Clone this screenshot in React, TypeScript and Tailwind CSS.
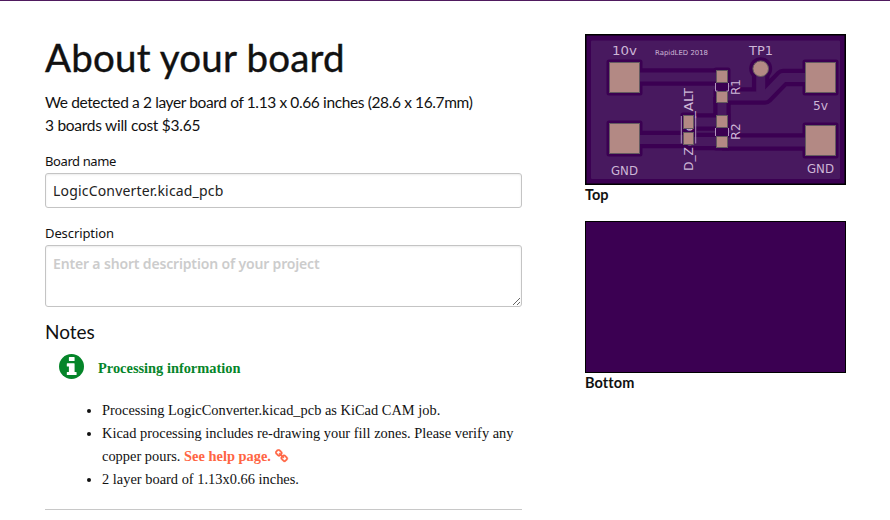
import type { ReactNode } from "react";

const PADS = [
  { x: 609, y: 62, w: 31, h: 31 },
  { x: 805, y: 62, w: 31, h: 31 },
  { x: 609, y: 123, w: 31, h: 31 },
  { x: 805, y: 125, w: 31, h: 31 },
  { x: 716, y: 70, w: 12, h: 13 },
  { x: 716, y: 91, w: 12, h: 12 },
  { x: 716, y: 115, w: 12, h: 13 },
  { x: 716, y: 136, w: 12, h: 12 },
  { x: 683, y: 115, w: 11, h: 14 },
  { x: 683, y: 132, w: 11, h: 13 },
];

const TRACES = [
  "M625 77H722",
  "M820 77.5H783L765 96H722",
  "M760.7 69V94",
  "M722 97V122H688",
  "M625 139.500H688L691 141.500H722",
  "M722 142H820",
];

const LABELS = [
  { t: "10v", x: 612, y: 55, w: 25, s: 12.5 },
  { t: "RapidLED 2018", x: 655, y: 54.5, w: 53, s: 6.8 },
  { t: "TP1", x: 749, y: 55, w: 24, s: 12.5 },
  { t: "5v", x: 813, y: 109.5, w: 15, s: 12.5 },
  { t: "GND", x: 611, y: 175, w: 27, s: 12.5 },
  { t: "GND", x: 807, y: 173, w: 27, s: 12.5 },
];

const VERTICAL_LABELS = [
  { t: "R1", x: 740, y: 95, w: 16 },
  { t: "R2", x: 740, y: 140, w: 17 },
  { t: "D_Z", x: 693, y: 171, w: 24 },
  { t: "ener", x: 693, y: 146, w: 27 },
  { t: "_ALT", x: 693, y: 118, w: 30 },
];

function TopBoard() {
  return (
    <svg className="block h-[151px] w-[261px]" viewBox="585 34 261 151">
      <rect x="585" y="34" width="261" height="151" fill="#000" />
      <rect x="586.5" y="35.5" width="258" height="148" fill="#3b0052" />
      <rect x="591" y="40.5" width="249" height="138.5" rx="1" fill="#48195f" />
      <g fill="none" stroke="#3b0052" strokeWidth="17.5" strokeLinejoin="round">
        {TRACES.map((d) => <path key={d} d={d} />)}
      </g>
      {PADS.map((p) => (
        <rect key={`${p.x}-${p.y}`} x={p.x - 2.5} y={p.y - 2.5} width={p.w + 5} height={p.h + 5} rx="2.5" fill="#3b0052" />
      ))}
      <circle cx="760.7" cy="68.7" r="11.5" fill="#3b0052" />
      <g fill="none" stroke="#48195f" strokeWidth="9" strokeLinejoin="round">
        {TRACES.map((d) => <path key={d} d={d} />)}
      </g>
      <rect x="716" y="83" width="12" height="8" fill="#3b0052" />
      <rect x="716" y="128" width="12" height="8" fill="#3b0052" />
      <g fill="#cdb6d6" fontFamily="'DejaVu Sans', sans-serif" fontWeight="400">
        {LABELS.map((l) => (
          <text key={`${l.t}${l.x}`} x={l.x} y={l.y} fontSize={l.s} textLength={l.w} lengthAdjust="spacingAndGlyphs">{l.t}</text>
        ))}
        {VERTICAL_LABELS.map((l) => (
          <text key={l.t} transform={`translate(${l.x} ${l.y}) rotate(-90)`} fontSize="12.5" textLength={l.w} lengthAdjust="spacingAndGlyphs">{l.t}</text>
        ))}
      </g>
      {PADS.map((p) => (
        <rect key={`${p.x}-${p.y}`} x={p.x + 0.5} y={p.y + 0.5} width={p.w - 1} height={p.h - 1} fill="#b38984" stroke="#645a5f" />
      ))}
      <circle cx="760.7" cy="68.7" r="7.8" fill="#b38984" stroke="#645a5f" />
      <g fill="none" stroke="#b294c0" strokeWidth="1">
        <path d="M715.500 83v8h2M728.500 83v8h-2M715.500 128v8M728.500 128v8M681.300 116v27.500M695.700 116v27.500" />
      </g>
    </svg>
  );
}

function InfoIcon() {
  return (
    <svg className="size-[25px]" viewBox="0 0 25 25">
      <circle cx="12.500" cy="12.500" r="12.500" fill="currentColor" />
      <path fill="#fff" d="M10.400 3h4.700q.5 0 .5.500v3q0 .5-.5.500h-4.700q-.5 0-.5-.5v-3q0-.5.5-.5ZM8.300 9.300h6.800q.5 0 .5.5v8.300h1.500q.5 0 .5.500v2q0 .5-.5.500H8.300q-.5 0-.5-.5v-2q0-.5.5-.5h1.600v-5.700H8.300q-.5 0-.5-.5V9.800q0-.5.500-.5Z" />
    </svg>
  );
}

function LinkIcon() {
  return (
    <svg className="inline size-[14px] align-[-1.5px]" viewBox="0 0 1792 1792" fill="currentColor" stroke="currentColor" strokeWidth="50">
      <path d="M1456 1216q0-40-28-68l-208-208q-28-28-68-28-42 0-72 32 3 3 19 18.500t21.500 21.500 15 19 13 25.500 3.500 27.500q0 40-28 68t-68 28q-15 0-27.500-3.500t-25.500-13-19-15-21.500-21.500-18.500-19q-33 31-33 73 0 40 28 68l206 207q27 27 68 27 40 0 68-26l147-146q28-28 28-67zm-703-705q0-40-28-68l-206-207q-28-28-68-28-39 0-68 27l-147 146q-28 28-28 67 0 40 28 68l208 208q27 27 68 27 42 0 72-31-3-3-19-18.500t-21.500-21.500-15-19-13-25.500-3.500-27.500q0-40 28-68t68-28q15 0 27.500 3.500t25.500 13 19 15 21.500 21.500 18.500 19q33-31 33-73zm895 705q0 120-85 203l-147 146q-83 83-203 83-121 0-204-85l-206-207q-83-83-83-203 0-123 88-209l-88-88q-86 88-208 88-120 0-204-84l-208-208q-84-84-84-204t85-203l147-146q83-83 203-83 121 0 204 85l206 207q83 83 83 203 0 123-88 209l88 88q86-88 208-88 120 0 204 84l208 208q84 84 84 204z" />
    </svg>
  );
}

function Note({ children }: { children: ReactNode }) {
  return <li className="leading-[23px]">{children}</li>;
}

export default function App() {
  return (
    <div className="h-[520px] w-[890px] overflow-hidden border-t border-[#4f1a5e] bg-white text-[#111]">
      <div className="flex pl-[45px]">
        <main className="w-[477px] shrink-0 pt-[32px] font-['Lato',sans-serif]">
          <h1 className="h-[58px] whitespace-nowrap text-[38.5px] leading-[48px] tracking-[0.2px] [-webkit-text-stroke:0.4px_#111]">About your board</h1>
          <div className="whitespace-nowrap text-[15.5px] leading-[23px]">
            <p className="tracking-[-0.38px]">We detected a 2 layer board of 1.13 x 0.66 inches (28.6 x 16.7mm)</p>
            <p className="tracking-[-0.27px]">3 boards will cost $3.65</p>
          </div>
          <div className="pt-[13px] font-['Noto_Sans',sans-serif]">
            <label className="block h-[23px] text-[13px] leading-[22px] tracking-[-0.4px]" htmlFor="name">Board name</label>
            <input id="name" defaultValue="LogicConverter.kicad_pcb" className="block h-[35px] w-full rounded-[3px] border border-[#c4c4c4] px-[7px] text-[14px] tracking-[0.18px] text-[#222] shadow-[inset_0_1px_2px_rgba(0,0,0,0.08)]" />
            <label className="mt-[14px] block h-[23px] text-[13px] leading-[22px] tracking-[-0.1px]" htmlFor="description">Description</label>
            <textarea id="description" placeholder="Enter a short description of your project" className="block h-[62px] w-full resize rounded-[3px] border border-[#c4c4c4] px-[7px] py-[8px] text-[14px] leading-[20px] tracking-[-0.16px] shadow-[inset_0_1px_2px_rgba(0,0,0,0.08)] placeholder:font-semibold placeholder:text-[#ccc]" />
          </div>
          <h2 className="mt-[11px] text-[19px] leading-[28px]">Notes</h2>
          <section className="font-['Liberation_Serif',serif] text-[14.4px]">
            <div className="flex pl-[14px] pt-[8px] text-[#058529]">
              <InfoIcon />
              <h3 className="ml-[14px] pt-[3px] font-bold leading-[23px]">Processing information</h3>
            </div>
            <ul className="mt-[19px] list-disc pl-[57px] tracking-[0.01px]">
              <Note>Processing LogicConverter.kicad_pcb as KiCad CAM job.</Note>
              <Note>
                Kicad processing includes re-drawing your fill zones. Please verify any<br />
                copper pours. <a href="#help" className="font-bold text-[#ff6543]">See help page. <LinkIcon /></a>
              </Note>
              <Note>2 layer board of 1.13x0.66 inches.</Note>
            </ul>
            <hr className="mt-[18px] border-[#c8c8c8]" />
          </section>
        </main>
        <aside className="ml-[63px] w-[261px] pt-[33px] font-['Lato',sans-serif] text-[14.5px] font-bold leading-[20px]">
          <TopBoard />
          <div className="h-[36px]">Top</div>
          <div className="h-[152px] border border-black bg-[#3b0052]" />
          <div className="tracking-[0.1px]">Bottom</div>
        </aside>
      </div>
    </div>
  );
}
